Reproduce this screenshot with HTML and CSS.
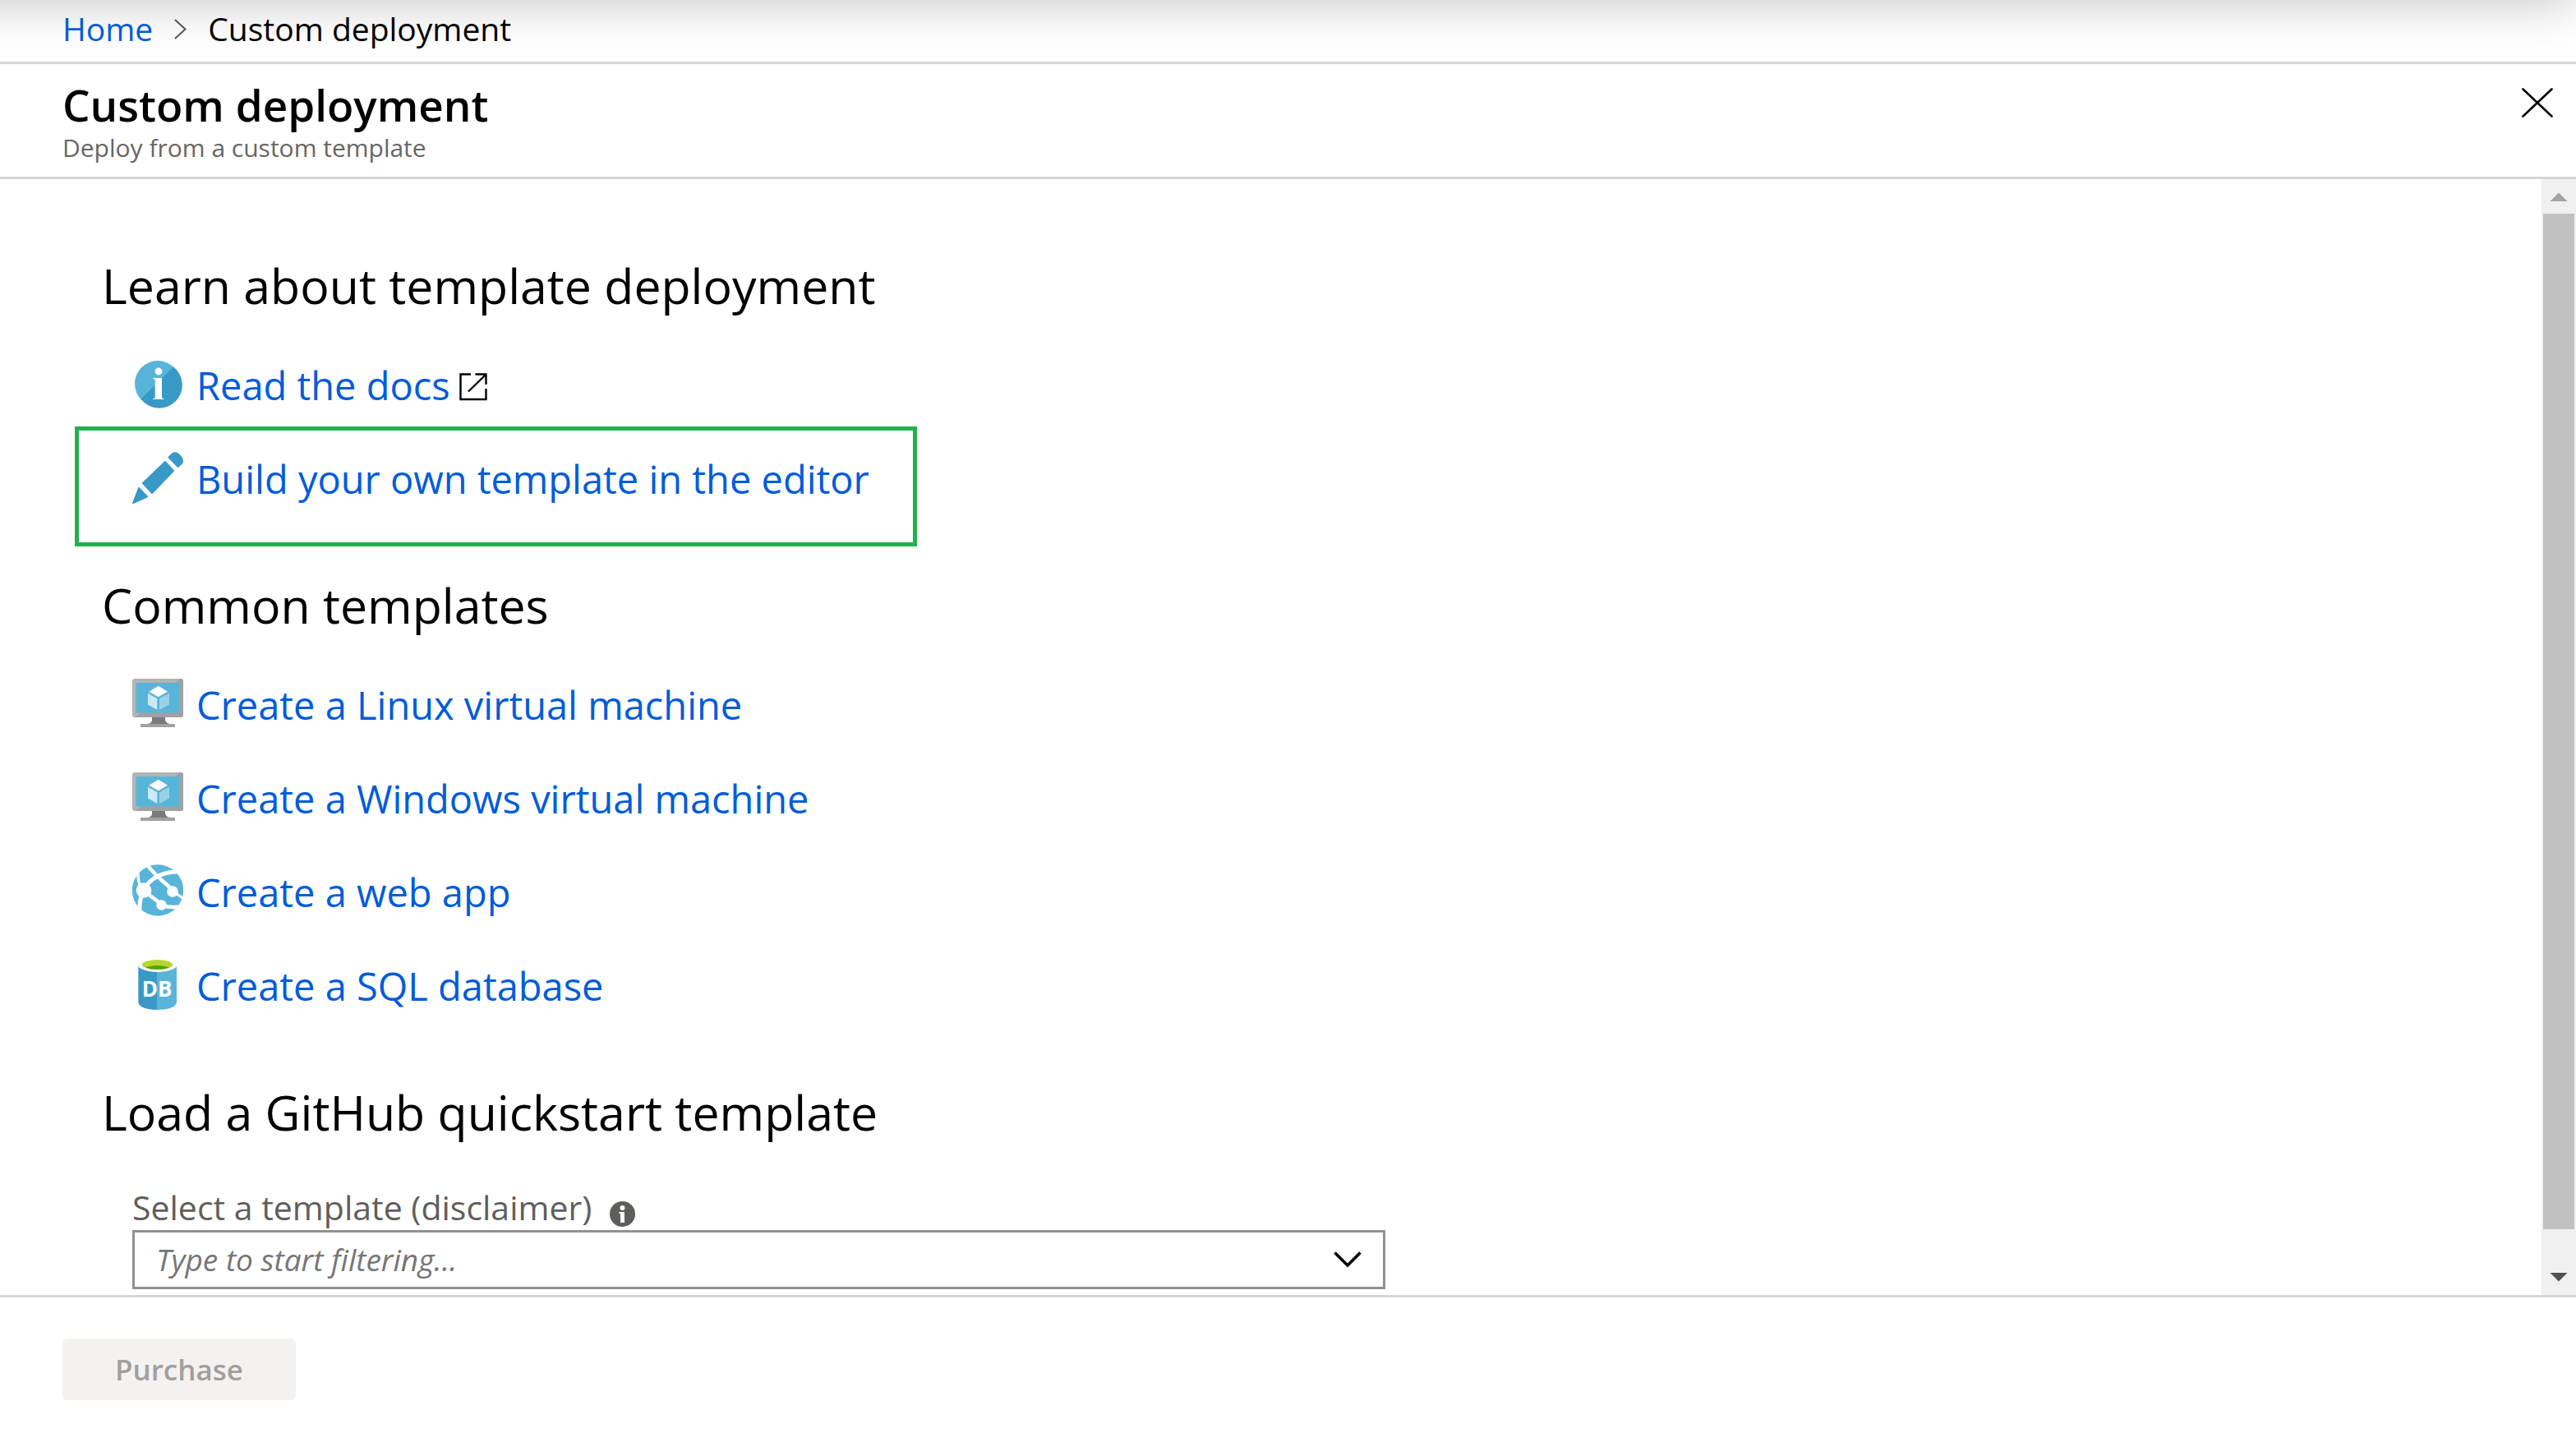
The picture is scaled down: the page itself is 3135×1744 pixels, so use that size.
FILE: index.html
```html
<!DOCTYPE html>
<html lang="en">
<head>
  <meta charset="utf-8">
  <meta name="viewport" content="width=device-width, initial-scale=1">
  <title>Custom deployment</title>
  <link rel="stylesheet" href="styles.css">
</head>
<body>
  <svg class="sprite" aria-hidden="true">
    <symbol id="vm" viewBox="0 0 62 64">
      <path d="M24 48h16v4q1 5 7 5H17q7 0 7-5z" fill="#7a7a7a"/>
      <rect x="10" y="57" width="42" height="4" fill="#a0a1a2"/>
      <rect y="2" width="62" height="47" rx="3" fill="#b3b3b5"/>
      <path d="M59 2q3 0 3 3v41q0 3-3 3H3.500L58 2z" fill="#a0a1a2"/>
      <rect x="4.500" y="7" width="53" height="36.500" fill="#59b4d9"/>
      <circle cx="31" cy="5" r="1.200" fill="#b8d432"/>
      <path d="M31.700 10.700 43 17.700 31.700 24.300 20.300 17.700z" fill="#fff"/>
      <path d="M19 19.700 30.300 26.300V40L19 33.500z" fill="#cde8f4"/>
      <path d="M45 19.700 33 26.300V40l12-6.500z" fill="#9bd1e8"/>
    </symbol>
  </svg>

  <header class="topbar">
    <nav class="crumbs" aria-label="Breadcrumb">
      <a href="#">Home</a>
      <svg class="crumb-sep" viewBox="0 0 15 25" aria-hidden="true"><path d="M1 1 13.500 12.500 1 24" fill="none" stroke="#555" stroke-width="2"/></svg>
      <span>Custom deployment</span>
    </nav>
  </header>

  <div class="titlebar">
    <div>
      <h1>Custom deployment</h1>
      <p class="subtitle">Deploy from a custom template</p>
    </div>
    <button class="close" type="button" aria-label="Close">
      <svg viewBox="0 0 38 36" aria-hidden="true"><path d="M1.500 1.500 36.500 34.500M36.500 1.500 1.500 34.500" stroke="#000" stroke-width="2.600" stroke-linecap="round"/></svg>
    </button>
  </div>

  <div class="body">
    <main class="content">
      <section>
        <h2>Learn about template deployment</h2>
        <ul class="links">
          <li>
            <svg class="icon" viewBox="0 0 62 64" aria-hidden="true">
              <circle cx="31" cy="32" r="28" fill="#59b4d9"/>
              <path d="M50 11.500A28 28 0 1 1 10.500 50.500z" fill="#3999c6"/>
              <circle cx="32" cy="17" r="4.400" fill="#fff"/>
              <path d="M25 25h11v24q0 1 2.500 1.300V51H25v-.700Q27.700 50 27.700 49V27.500Q27.500 26 25 25.700z" fill="#fff"/>
            </svg>
            <a href="#">Read the docs</a>
            <svg class="external" viewBox="0 0 34 34" aria-hidden="true"><path d="M14 1.500H1.500V32h31V19M19.500 1.500h13V14M32 2 11 22.500" fill="none" stroke="#000" stroke-width="2.400"/></svg>
          </li>
          <li class="highlight">
            <svg class="icon" viewBox="0 0 62 64" aria-hidden="true">
              <g fill="#3999c6" stroke="#3999c6" stroke-width="2" stroke-linejoin="round">
                <path d="M1 63 8 45 18 55.500z"/>
                <path d="M13 39 40 13 50 24 24 51z"/>
                <path d="M44.500 7.500 49 3.200Q51 1.500 54 2.600 60 6 61 11.500q0 2.500-1 3.500L55.500 19z"/>
              </g>
            </svg>
            <a href="#">Build your own template in the editor</a>
          </li>
        </ul>
      </section>

      <section>
        <h2>Common templates</h2>
        <ul class="links">
          <li><svg class="icon" aria-hidden="true"><use href="#vm"/></svg><a href="#">Create a Linux virtual machine</a></li>
          <li><svg class="icon" aria-hidden="true"><use href="#vm"/></svg><a href="#">Create a Windows virtual machine</a></li>
          <li>
            <svg class="icon" viewBox="0 0 62 64" aria-hidden="true">
              <clipPath id="globe"><circle cx="31" cy="31.500" r="31.200"/></clipPath>
              <g clip-path="url(#globe)">
                <rect width="62" height="64" fill="#59b4d9"/>
                <g fill="none" stroke="#fff">
                  <path d="M12 31Q6 21 7 8" stroke-width="3.500"/>
                  <path d="M13 33Q8 44 9 58" stroke-width="5"/>
                  <path d="M17 26Q30 9 56 9" stroke-width="5"/>
                  <path d="M18 1 31 15 49 31" stroke-width="4.500"/>
                  <path d="M50 33 63 42" stroke-width="3"/>
                  <path d="M15 33 35 48" stroke-width="4.500"/>
                  <path d="M36 50Q46 53 58 51.500" stroke-width="4.500"/>
                </g>
                <g fill="#fff">
                  <circle cx="14" cy="31.500" r="9.300"/>
                  <circle cx="49" cy="33" r="6.800"/>
                  <circle cx="35.500" cy="49.500" r="6.200"/>
                </g>
              </g>
            </svg>
            <a href="#">Create a web app</a>
          </li>
          <li>
            <svg class="icon" viewBox="0 0 62 64" aria-hidden="true">
              <path d="M7.300 8V54Q9 62.500 30.700 63V8z" fill="#3999c6"/>
              <path d="M54 8V54Q52.400 62.500 30.300 63V8z" fill="#59b4d9"/>
              <ellipse cx="30.700" cy="8" rx="24" ry="9" fill="#fff"/>
              <ellipse cx="30.500" cy="8" rx="18.500" ry="6" fill="#b8d432"/>
              <path d="M16 11.500Q22 9 30.500 9T45 11.500Q39 14 30.500 14T16 11.500z" fill="#57a300"/>
              <text class="db" x="30" y="47">DB</text>
            </svg>
            <a href="#">Create a SQL database</a>
          </li>
        </ul>
      </section>

      <section>
        <h2>Load a GitHub quickstart template</h2>
        <div class="field">
          <div class="label-row">
            <label for="template">Select a template (disclaimer)</label>
            <svg class="info" viewBox="0 0 31 31" aria-hidden="true">
              <circle cx="15.500" cy="15.500" r="15.500" fill="#605e5c"/>
              <circle cx="15.500" cy="8" r="3" fill="#fff"/>
              <path d="M11.500 13h6.500v13h-5V15h-1.500z" fill="#fff"/>
            </svg>
          </div>
          <div class="combo">
            <input id="template" type="text" placeholder="Type to start filtering...">
            <button type="button" aria-label="Show templates">
              <svg viewBox="0 0 34 20" aria-hidden="true"><path d="M1.500 1.500 17 17 32.500 1.500" fill="none" stroke="#000" stroke-width="3.600"/></svg>
            </button>
          </div>
        </div>
      </section>
    </main>

    <div class="scrollbar" aria-hidden="true">
      <svg class="arrow" viewBox="0 0 42 42"><path d="M21 16.500 31.500 27h-21z" fill="#a3a3a3"/></svg>
      <div class="track"><div class="thumb"></div></div>
      <svg class="arrow" viewBox="0 0 42 42"><path d="M21 25.500 31.500 15h-21z" fill="#505050"/></svg>
    </div>
  </div>

  <footer class="footer">
    <button class="purchase" type="button" disabled>Purchase</button>
  </footer>
</body>
</html>
```
FILE: styles.css
```css
* {
  box-sizing: border-box;
}

body {
  margin: 0;
  min-height: 100vh;
  display: flex;
  flex-direction: column;
  background: #fff;
  color: #000;
  font-family: "Open Sans", "Noto Sans", sans-serif;
}

h1, h2, p, ul {
  margin: 0;
  padding: 0;
  font-weight: 400;
}

svg {
  display: block;
  flex: none;
}

button {
  font-family: inherit;
  border: 0;
  padding: 0;
  background: none;
}

a {
  color: #015cda;
  text-decoration: none;
}

.sprite {
  position: absolute;
  width: 0;
  height: 0;
}

/* Breadcrumb bar, shaded by the portal bar above it */
.topbar {
  position: relative;
  overflow: hidden;
  padding: 0 76px 5px;
  border-bottom: 3px solid #d6d6d6;
}

.topbar::before {
  content: "";
  position: absolute;
  inset: -100px 0 100% -100px;
  box-shadow: 0 0 64px rgba(0, 0, 0, 0.26);
}

.crumbs {
  position: relative;
  display: flex;
  align-items: center;
  gap: 26px;
  font-size: 39px;
  line-height: 70px;
}

.crumb-sep {
  width: 15px;
  height: 25px;
}

/* Blade title */
.titlebar {
  display: flex;
  justify-content: space-between;
  align-items: flex-start;
  padding: 15px 28px 18px 76px;
  border-bottom: 3px solid #d6d6d6;
}

h1 {
  font-size: 53px;
  font-weight: 600;
  line-height: 70px;
}

.subtitle {
  color: #666;
  font-size: 30px;
  line-height: 34px;
}

.close {
  margin-top: 14px;
}

.close svg {
  width: 38px;
  height: 36px;
}

/* Scrolling body */
.body {
  flex: 1;
  display: flex;
}

.content {
  flex: 1;
  display: flex;
  flex-direction: column;
  gap: 58px;
  padding: 89px 124px 7px;
}

h2 {
  font-size: 59px;
  line-height: 80px;
}

.links {
  list-style: none;
  margin-top: 23px;
  padding-left: 37px;
}

.links li {
  position: relative;
  display: flex;
  align-items: center;
  width: fit-content;
  height: 114px;
  font-size: 47px;
}

.links a {
  padding-top: 4px;
}

.icon {
  width: 62px;
  height: 64px;
  margin-right: 16px;
}

.external {
  width: 34px;
  height: 34px;
  margin: 8px 0 0 11px;
}

.highlight::after {
  content: "";
  position: absolute;
  inset: -5px -58px -27px -70px;
  border: 5px solid #22b14c;
  pointer-events: none;
}

.db {
  fill: #fff;
  font-size: 26px;
  font-weight: 700;
  text-anchor: middle;
}

.field {
  max-width: 1562px;
  margin-top: 48px;
  padding-left: 37px;
}

.label-row {
  display: flex;
  align-items: flex-end;
  gap: 22px;
  color: #605e5c;
  font-size: 41px;
  line-height: 56px;
}

.info {
  width: 31px;
  height: 31px;
  margin-bottom: 4px;
}

.combo {
  display: flex;
  align-items: center;
  height: 72px;
  padding: 0 26px;
  border: 3px solid #919191;
}

.combo input {
  flex: 1;
  min-width: 0;
  padding: 0;
  border: 0;
  outline: 0;
  font: italic 37px/56px "Open Sans", "Noto Sans", sans-serif;
}

.combo input::placeholder {
  color: #767676;
  opacity: 1;
}

.combo svg {
  width: 34px;
  height: 20px;
}

.scrollbar {
  display: flex;
  flex-direction: column;
  width: 42px;
  background: #f0f0f0;
}

.arrow {
  width: 42px;
  height: 42px;
}

.track {
  flex: 1;
  display: flex;
  flex-direction: column;
  padding: 0 2px;
}

.thumb {
  height: 97%;
  background: #c1c1c1;
}

/* Action bar */
.footer {
  padding: 50px 76px 40px;
  border-top: 3px solid #d6d6d6;
}

.purchase {
  display: block;
  padding: 0 64px;
  border-radius: 6px;
  background: #f3f2f1;
  color: #a19f9d;
  font-size: 35px;
  font-weight: 600;
  line-height: 75px;
}
```
